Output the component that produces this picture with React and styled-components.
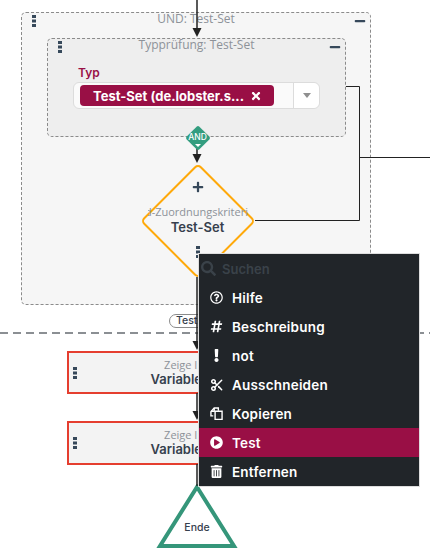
import styled, { createGlobalStyle } from "styled-components";
import {
  FaExclamation,
  FaHashtag,
  FaMinus,
  FaPlayCircle,
  FaPlus,
  FaRegQuestionCircle,
  FaSearch,
  FaTimes,
  FaTrashAlt,
} from "react-icons/fa";
import { Scissors } from "lucide-react";

const GlobalStyle = createGlobalStyle`
  html, body {
    margin: 0;
    background: #fff;
    overflow: hidden;
  }
`;

const Canvas = styled.div`
  position: relative;
  width: 430px;
  height: 556px;
  overflow: hidden;
  padding-top: 12px;
  box-sizing: border-box;
  font-family: Inter, "Liberation Sans", sans-serif;
`;

const Wires = styled.svg`
  position: absolute;
  left: 0;
  top: 0;
  z-index: 1;
  pointer-events: none;
`;

const Group = styled.div`
  position: relative;
  box-sizing: border-box;
  border: 1px dashed #8b8b8b;
  border-radius: 5px;
  background: ${(p) => (p.$inner ? "#eeeeee" : "#f6f6f6")};
  height: ${(p) => (p.$inner ? "99px" : "293px")};
  width: ${(p) => (p.$inner ? "299px" : "350px")};
  margin-left: ${(p) => (p.$inner ? "25px" : "21px")};
`;

const GroupTitle = styled.div`
  font-family: "Open Sans", sans-serif;
  font-size: 12px;
  line-height: 12px;
  text-align: center;
  color: #8d9299;
`;

const GroupBar = styled.div`
  display: flex;
  justify-content: space-between;
  align-items: center;
  height: 16px;
  padding: 0 4px 0 10px;
  color: #36485a;
`;

const Header = styled.div`
  position: relative;
  height: 25px;
`;

const HeaderLayer = styled.div`
  position: absolute;
  inset: 0;
`;

const Collapse = styled(FaMinus)`
  width: 12px;
  height: 12px;
`;

const GripIcon = styled.svg`
  display: block;
  flex: none;
  color: #36485a;
`;

const Grip = ({ className }) => (
  <GripIcon className={className} width="4" height="12" viewBox="0 0 4 12">
    <rect y="0" width="4" height="3" fill="currentColor" />
    <rect y="4.5" width="4" height="3" fill="currentColor" />
    <rect y="9" width="4" height="3" fill="currentColor" />
  </GripIcon>
);

const Field = styled.div`
  padding: 2px 25px 0;
`;

const FieldLabel = styled.div`
  font-size: 12px;
  font-weight: 600;
  line-height: 14px;
  color: #990f45;
  padding-left: 5px;
  margin-bottom: 2px;
`;

const Select = styled.div`
  display: flex;
  align-items: stretch;
  width: 247px;
  height: 27px;
  box-sizing: border-box;
  border: 1px solid #dcdcdc;
  border-radius: 6px;
  background: #fafafa;
`;

const SelectValue = styled.div`
  flex: 1;
  display: flex;
  align-items: center;
  padding-left: 6px;
`;

const Chip = styled.div`
  display: flex;
  align-items: center;
  justify-content: space-between;
  box-sizing: border-box;
  width: 194px;
  height: 21px;
  padding: 0 12px 0 13px;
  border-radius: 4px;
  background: #990f45;
  color: #fff;
  font-size: 13px;
  font-weight: 700;
  white-space: nowrap;
`;

const ChipClose = styled(FaTimes)`
  width: 12px;
  height: 12px;
`;

const Caret = styled.div`
  width: 25px;
  border-left: 1px solid #dcdcdc;
  background: #fff;
  border-radius: 0 6px 6px 0;
  display: flex;
  align-items: center;
  justify-content: center;

  &::after {
    content: "";
    border-left: 4.5px solid transparent;
    border-right: 4.5px solid transparent;
    border-top: 5px solid #8f8f8f;
  }
`;

const AndBadge = styled.div`
  position: absolute;
  left: 137px;
  top: 86px;
  width: 25px;
  height: 25px;
  display: flex;
  align-items: center;
  justify-content: center;
  color: #fff;
  font-size: 8.5px;
  font-weight: 500;
  z-index: 2;

  &::before {
    content: "";
    position: absolute;
    left: 3.5px;
    top: 3.5px;
    width: 18px;
    height: 18px;
    border-radius: 2px;
    background: #339d7f;
    transform: rotate(45deg);
  }

  &::after {
    content: "";
    position: absolute;
    left: 9.5px;
    top: 19px;
    border-left: 3px solid transparent;
    border-right: 3px solid transparent;
    border-top: 3px solid #fff;
  }

  span {
    position: relative;
    margin-top: -1px;
  }
`;

const Decision = styled.div`
  position: relative;
  width: 115px;
  height: 115px;
  margin: 26px 0 0 118px;
  display: flex;
  flex-direction: column;
  align-items: center;
`;

const DecisionShape = styled.div`
  position: absolute;
  left: 16.5px;
  top: 16.5px;
  width: 82px;
  height: 82px;
  box-sizing: border-box;
  border: 2.5px solid #ffa90a;
  border-radius: 5px;
  background: #f6f6f6;
  transform: rotate(45deg);
`;

const DecisionBody = styled.div`
  position: relative;
  width: 100px;
  display: flex;
  flex-direction: column;
  align-items: center;
`;

const Plus = styled(FaPlus)`
  width: 12px;
  height: 12px;
  color: #36485a;
  margin-top: 18px;
`;

const ClippedLabel = styled.div`
  width: 100px;
  margin-top: 12px;
  display: flex;
  justify-content: center;
  overflow: hidden;
  white-space: nowrap;
  font-family: "Open Sans", sans-serif;
  font-size: 11px;
  line-height: 14px;
  color: #8d9299;
`;

const DecisionName = styled.div`
  font-size: 13px;
  font-weight: 600;
  line-height: 16px;
  color: #36404d;
`;

const DecisionGrip = styled(Grip)`
  margin-top: 11px;
`;

const Pill = styled.div`
  box-sizing: border-box;
  width: 56px;
  height: 14px;
  margin: 9px 0 4px 169px;
  padding-left: 6px;
  border: 1px solid #8b8b8b;
  border-radius: 7px;
  background: #fff;
  color: #36404d;
  font-size: 10.5px;
  font-weight: 500;
  line-height: 12px;
`;

const Divider = styled.div`
  height: 2px;
  background: repeating-linear-gradient(90deg, #8b8f93 0 8px, transparent 8px 13px);
`;

const Step = styled.div`
  position: relative;
  box-sizing: border-box;
  width: 260px;
  height: ${(p) => p.$h}px;
  margin: ${(p) => p.$top}px 0 0 67px;
  border: 2px solid #e53e2f;
  background: #f3f3f3;
  text-align: center;
`;

const StepGrip = styled(Grip)`
  position: absolute;
  left: 4px;
  top: 14px;
`;

const StepKind = styled.div`
  font-family: "Open Sans", sans-serif;
  font-size: 11px;
  line-height: 13px;
  margin-top: 5px;
  color: #8d9299;
`;

const StepName = styled.div`
  font-size: 13px;
  font-weight: 600;
  line-height: 16px;
  color: #36404d;
`;

const EndNode = styled.div`
  position: relative;
  width: 84px;
  height: 66px;
  margin: 19px 0 0 155px;
  display: flex;
  align-items: flex-end;
  justify-content: center;
`;

const EndShape = styled.svg`
  position: absolute;
  left: 0;
  top: 0;
`;

const EndLabel = styled.div`
  position: relative;
  font-size: 10.5px;
  font-weight: 500;
  line-height: 14px;
  color: #36404d;
  margin-bottom: 15px;
`;

const Menu = styled.div`
  position: absolute;
  left: 198px;
  top: 253px;
  z-index: 3;
  box-sizing: border-box;
  width: 222px;
  height: 234px;
  border: 1px solid #dedede;
  background: #212529;
`;

const SearchRow = styled.div`
  display: flex;
  align-items: center;
  gap: 6px;
  height: 29px;
  padding-left: 2px;
  color: #3a4249;
  font-size: 13px;
  font-weight: 600;
`;

const SearchIcon = styled(FaSearch)`
  width: 15px;
  height: 15px;
`;

const MenuItem = styled.div`
  display: flex;
  align-items: center;
  height: 29px;
  padding-left: 11px;
  gap: 9px;
  color: #fff;
  font-size: 13.5px;
  font-weight: 600;
  letter-spacing: 0.2px;
  background: ${(p) => (p.$active ? "#990f45" : "transparent")};
`;

const MenuIcon = styled.span`
  display: flex;
  justify-content: center;
  width: 13px;

  svg {
    flex: none;
    width: 13px;
    height: 13px;
  }
`;

const CutIcon = styled(Scissors)`
  stroke-width: 2.6;

  ${MenuIcon} & {
    width: 14px;
    height: 14px;
  }
`;

const CopyIcon = () => (
  <svg viewBox="0 0 14 14" fill="none" stroke="currentColor" strokeWidth="1.5">
    <path d="M3.5 9.5H1V5L4.5 1H9V4" />
    <path d="M4.5 1V4.5H1" />
    <path d="M5.5 4.5H13V13.5H5.5Z" />
  </svg>
);

const menuItems = [
  { label: "Hilfe", icon: FaRegQuestionCircle },
  { label: "Beschreibung", icon: FaHashtag },
  { label: "not", icon: FaExclamation },
  { label: "Ausschneiden", icon: CutIcon },
  { label: "Kopieren", icon: CopyIcon },
  { label: "Test", icon: FaPlayCircle, active: true },
  { label: "Entfernen", icon: FaTrashAlt },
];

const arrows = [37, 163, 350, 420];

export default function App() {
  return (
    <Canvas>
      <GlobalStyle />
      <Group>
        <Header>
          <HeaderLayer>
            <GroupTitle>UND: Test-Set</GroupTitle>
          </HeaderLayer>
          <HeaderLayer>
            <GroupBar>
              <Grip />
              <Collapse />
            </GroupBar>
          </HeaderLayer>
        </Header>
        <Group $inner>
          <Header>
            <HeaderLayer>
              <GroupTitle>Typprüfung: Test-Set</GroupTitle>
            </HeaderLayer>
            <HeaderLayer>
              <GroupBar>
                <Grip />
                <Collapse />
              </GroupBar>
            </HeaderLayer>
          </Header>
          <Field>
            <FieldLabel>Typ</FieldLabel>
            <Select>
              <SelectValue>
                <Chip>
                  Test-Set (de.lobster.s...
                  <ChipClose />
                </Chip>
              </SelectValue>
              <Caret />
            </Select>
          </Field>
          <AndBadge>
            <span>AND</span>
          </AndBadge>
        </Group>
        <Decision>
          <DecisionShape />
          <DecisionBody>
            <Plus />
            <ClippedLabel>Und-Zuordnungskriterium</ClippedLabel>
            <DecisionName>Test-Set</DecisionName>
            <DecisionGrip />
          </DecisionBody>
        </Decision>
      </Group>
      <Pill>Test-Set</Pill>
      <Divider />
      <Step $h={43} $top={17}>
        <StepGrip />
        <StepKind>Zeige Inhalte</StepKind>
        <StepName>Variable: Tests</StepName>
      </Step>
      <Step $h={44} $top={27}>
        <StepGrip />
        <StepKind>Zeige Inhalte</StepKind>
        <StepName>Variable: Tests</StepName>
      </Step>
      <EndNode>
        <EndShape width="84" height="66" viewBox="0 0 84 66">
          <path d="M42 3 L79 62 L5 62 Z" fill="#fff" stroke="#35967a" strokeWidth="4" />
        </EndShape>
        <EndLabel>Ende</EndLabel>
      </EndNode>
      <Wires width="430" height="556" viewBox="0 0 430 556">
        <g fill="none" stroke="#222" strokeWidth="1.5">
          <path d="M197 0V30" />
          <path d="M197 148V156" />
          <path d="M197 277V345" />
          <path d="M197 393V415" />
          <path d="M197 464V486" />
        </g>
        <g fill="none" stroke="#222" strokeWidth="1">
          <path d="M346 86.5H359.5V220.5H255" />
          <path d="M359.5 157.5H430" />
        </g>
        {arrows.map((y) => (
          <path key={y} d={`M192.5 ${y - 9}H201.5L197 ${y}Z`} fill="#222" />
        ))}
      </Wires>
      <Menu>
        <SearchRow>
          <SearchIcon />
          Suchen
        </SearchRow>
        {menuItems.map(({ label, icon: Icon, active }) => (
          <MenuItem key={label} $active={active}>
            <MenuIcon>
              <Icon />
            </MenuIcon>
            {label}
          </MenuItem>
        ))}
      </Menu>
    </Canvas>
  );
}
